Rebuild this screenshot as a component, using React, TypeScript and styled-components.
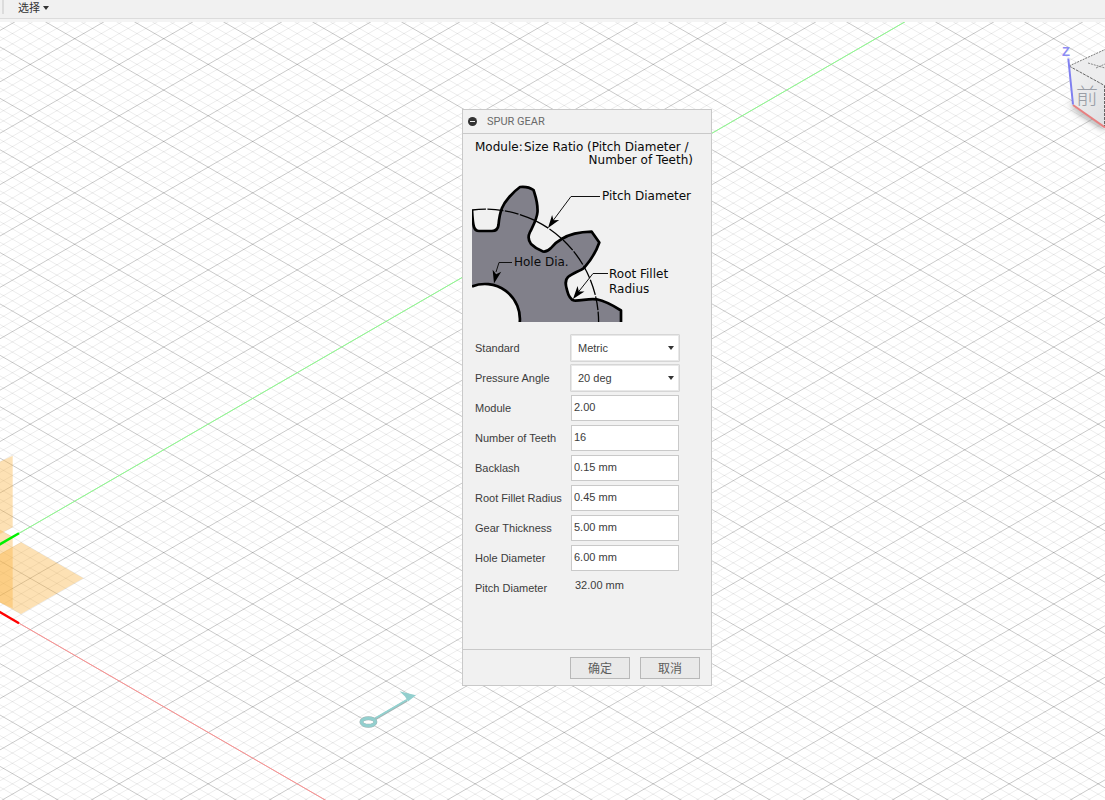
import React from 'react';
import styled, { createGlobalStyle } from 'styled-components';

const GlobalStyle = createGlobalStyle`
  * { box-sizing: border-box; }
  html, body, #root { height: 100%; }
  body {
    margin: 0;
    background: #ffffff;
    color: #3c3c3c;
    font: 11px/14px "Liberation Sans", "Noto Sans CJK SC", sans-serif;
    overflow: hidden;
  }
`;

const Page = styled.div`
  display: flex;
  flex-direction: column;
  min-height: 100%;
`;

const Toolbar = styled.header`
  display: flex;
  height: 22px;
  padding-left: 2px;
  background: linear-gradient(#f1f1f1 18px, #dcdcdc 18px, #dcdcdc 19px, #f4f4f4 19px);
`;

const ToolbarGrip = styled.span`
  width: 2px;
  height: 14px;
  background: #dcdcdc;
`;

const SelectTool = styled.button`
  display: flex;
  align-items: center;
  gap: 3px;
  height: 16px;
  margin-left: 14px;
  padding: 0;
  border: 0;
  background: none;
  color: #333333;
  font: 11px/16px "Liberation Sans", "Noto Sans CJK SC", sans-serif;
`;

const Canvas = styled.main`
  position: relative;
  flex: 1;
  overflow: hidden;
`;

const Scene = styled.svg`
  position: absolute;
  top: 0;
  left: 0;
  width: 100%;
  height: 100%;
`;

const ViewCube = styled.svg`
  position: absolute;
  top: 0;
  right: 0;
`;

const AxisLabel = styled.text`
  font: bold 13px "Liberation Sans", sans-serif;
  fill: #8c8cf4;
`;

const FaceLabel = styled.text`
  font: 300 22px "Noto Sans CJK SC", sans-serif;
  fill: #9a9ea6;
`;

const Dialog = styled.form`
  position: absolute;
  top: 87px;
  left: 462px;
  display: flex;
  flex-direction: column;
  width: 250px;
  border: 1px solid #c9c9c9;
  background: #f1f1f1;
`;

const TitleBar = styled.div`
  display: flex;
  align-items: center;
  gap: 10px;
  height: 24px;
  padding-left: 5px;
  border-bottom: 1px solid #c9c9c9;
`;

const Title = styled.h1`
  margin: 0;
  color: #6a6a6a;
  font: 400 11px/16px Roboto, sans-serif;
`;

const Collapse = styled.button`
  display: flex;
  padding: 0;
  border: 0;
  background: none;
`;

const Diagram = styled.svg`
  display: block;
  margin-left: 9px;
`;

const DiagramText = styled.text`
  font: 12px "DejaVu Sans", sans-serif;
  fill: #0a0a0a;
`;

const Fields = styled.div`
  display: flex;
  flex-direction: column;
  padding: 11px 32px 46px 12px;
`;

const Row = styled.div`
  display: grid;
  grid-template-columns: 95px 110px;
  align-items: center;
  height: 30px;
`;

const SelectBox = styled.div`
  position: relative;
  display: flex;
`;

const Select = styled.select`
  appearance: none;
  width: 100%;
  height: 28px;
  padding: 0 20px 0 7px;
  border: 1px solid #d6d6d6;
  outline: 1px solid #e8e8e8;
  outline-offset: -2px;
  border-radius: 1px;
  background: #ffffff;
  color: inherit;
  font: inherit;
`;

const SelectArrow = styled.svg`
  position: absolute;
  top: 12px;
  right: 6px;
  pointer-events: none;
`;

const Input = styled.input`
  height: 26px;
  margin: 0 1px;
  padding: 0 2px 2px;
  border: 1px solid #c9c9c9;
  background: #ffffff;
  color: inherit;
  font: inherit;
`;

const Value = styled.output`
  padding: 0 0 6px 5px;
`;

const Footer = styled.footer`
  display: flex;
  justify-content: flex-end;
  gap: 10px;
  padding: 7px 11px 6px;
  border-top: 1px solid #c9c9c9;
`;

const Button = styled.button`
  width: 60px;
  height: 22px;
  padding: 0;
  border: 1px solid #b8b8b8;
  background: #e9e9e9;
  color: #5c5c5c;
  font: 12px/18px "Noto Sans CJK SC", sans-serif;
`;

const CELL_W = 89;
const CELL_H = 51.39;
const SLOPE = CELL_H / CELL_W;
const SPAN = 2670;

/* Two families of parallel lines, mirrored about the vertical; every fifth line is a major one. */
const gridPath = (major: boolean) => {
  const parts: string[] = [];
  const rise = SLOPE * SPAN;
  for (let k = -160; k < 460; k++) {
    if ((k % 5 === 0) !== major) continue;
    const down = 16.7 - SLOPE * 74.7 + (k * CELL_H) / 5;
    const up = 16.7 + SLOPE * 74.7 + (k * CELL_H) / 5;
    parts.push(`M0 ${down.toFixed(2)}L${SPAN} ${(down + rise).toFixed(2)}`);
    parts.push(`M0 ${up.toFixed(2)}L${SPAN} ${(up - rise).toFixed(2)}`);
  }
  return parts.join('');
};

const MINOR_GRID = gridPath(false);
const MAJOR_GRID = gridPath(true);

const Workspace = () => (
  <Scene aria-hidden="true">
    <path d={MINOR_GRID} stroke="#000" strokeOpacity="0.075" fill="none" />
    <path d={MAJOR_GRID} stroke="#000" strokeOpacity="0.21" fill="none" />
    <g fill="#fbb03b" fillOpacity="0.38">
      <path d="M0 439.7L12.7 433.7V505.3L0 511.5Z" />
      <path d="M0 508L12.7 514.7V586.3L0 580.5Z" />
      <path d="M0 532L21 520.3L83.3 556.3L21 592L0 580.5Z" />
    </g>
    <path d="M18 511.9L1105 -115.7" stroke="#8cff8c" />
    <path d="M18 600.6L1105 1228.2" stroke="#ff8f8f" />
    <path d="M-2 523.4L19 511.3" stroke="#00f000" strokeWidth="2.4" />
    <path d="M-2 589L19 601.2" stroke="#ff0000" strokeWidth="2.4" />
    <g>
      <path d="M374.5 697.5L407 678.5" stroke="#a4b4b4" strokeWidth="2.6" />
      <path d="M374 697L407 677.8" stroke="#92d2d0" strokeWidth="1.8" />
      <ellipse cx="368.4" cy="700" rx="7" ry="3.8" fill="#fff" stroke="#a4b4b4" strokeWidth="4" />
      <ellipse cx="368.4" cy="700" rx="7" ry="3.8" fill="none" stroke="#92cfce" strokeWidth="3" />
      <path d="M399.5 669.3L416 673.3L408 679.5L405 674.5Z" fill="#92cfce" />
    </g>
  </Scene>
);

const Cube = () => (
  <ViewCube width="50" height="118" viewBox="1055 22 50 118" role="img" aria-label="View cube">
    <defs>
      <filter id="soft" x="-50%" y="-50%" width="200%" height="200%">
        <feGaussianBlur stdDeviation="3" />
      </filter>
      <linearGradient id="front" x1="0" y1="0" x2="1" y2="1">
        <stop offset="0" stopColor="#f3f3f3" />
        <stop offset="1" stopColor="#dedfe2" />
      </linearGradient>
    </defs>
    <path d="M1068 101L1076 112L1105 131V120Z" fill="#777" fillOpacity="0.6" filter="url(#soft)" />
    <path d="M1069 66L1105 49.5V85.5Z" fill="#ededee" />
    <path d="M1069 66L1104.5 85.5V127L1073 105Z" fill="url(#front)" />
    <path d="M1069 66L1105 49.5" stroke="#777" strokeDasharray="2 1" fill="none" />
    <path d="M1069 66L1104.5 85.5V127" stroke="#666" strokeDasharray="3 1" fill="none" />
    <path d="M1088 63L1105 68M1096 68L1105 64" stroke="#888" strokeDasharray="2 1" fill="none" />
    <FaceLabel x="1076" y="104">前</FaceLabel>
    <path d="M1073 105L1105 127.5" stroke="#e88080" strokeWidth="2" />
    <path d="M1068.3 58.5L1073 104.5" stroke="#8080f0" strokeWidth="2" />
    <AxisLabel x="1062" y="56">Z</AxisLabel>
  </ViewCube>
);

const GEAR =
  'M0 76C0.5 85 1 90 2 93C3 96 4 97 7 97H20C24 97 26 95 26.5 91C27 85 28 79 30 74C33 67 41 58 48 53C53 52.5 58 53.5 61.5 56C63 61 66 68 65.5 78C65 85 62 90 58 98C56 102 56 106 59 110C62 113 67 116 71 117.5C74 118 77 116 79 114C82 110 86 107 89.7 105C96 101 106 98 119.7 97.7L127.3 108.5C124 118 119 126 112.3 133.7C108 137 101 139 96 143C92 147 94 152 95 156C96 160 97 165 102 166.5C109 167 117 164 124.7 165.3C133 167 142 172 149 176.5V188';

const arrowHead = 'M0 0L4.4 -13L0 -9.5L-4.4 -13Z';

const GearDiagram = () => (
  <Diagram width="230" height="188" viewBox="0 0 230 188" role="img" aria-label="Spur gear dimensions">
    <path d={`${GEAR}H0V76Z`} fill="#81808a" />
    <circle cx="13" cy="185" r="35" fill="#f1f1f1" />
    <path d={GEAR} fill="none" stroke="#000" strokeWidth="2.7" strokeLinejoin="round" />
    <path d="M0 152.5A35 35 0 0 1 47.8 188" fill="none" stroke="#000" strokeWidth="2.7" />
    <path
      d="M0 76A113 113 0 0 1 126.6 188"
      fill="none"
      stroke="#000"
      strokeWidth="1.3"
      strokeDasharray="14 1.5 16 1.5"
    />
    <g fill="none" stroke="#111">
      <path d="M128 62.5H99L80 88" />
      <path d="M40 128.5H27L24 138" />
      <path d="M136 139.5H121L104 161" />
    </g>
    <path d={arrowHead} transform="translate(76 94) rotate(36)" />
    <path d={arrowHead} transform="translate(22 149.5) rotate(13)" />
    <path d={arrowHead} transform="translate(101 165) rotate(38)" />
    <DiagramText x="3" y="17">Module:</DiagramText>
    <DiagramText x="52" y="17">Size Ratio (Pitch Diameter /</DiagramText>
    <DiagramText x="221" y="30" textAnchor="end">Number of Teeth)</DiagramText>
    <DiagramText x="130" y="66">Pitch Diameter</DiagramText>
    <DiagramText x="42" y="132">Hole Dia.</DiagramText>
    <DiagramText x="137" y="144">Root Fillet</DiagramText>
    <DiagramText x="137" y="159">Radius</DiagramText>
  </Diagram>
);

const CHOICES = [
  { id: 'standard', label: 'Standard', options: ['Metric', 'English'] },
  { id: 'pressure-angle', label: 'Pressure Angle', options: ['20 deg', '14.5 deg', '25 deg'] },
];

const INPUTS = [
  { id: 'module', label: 'Module', value: '2.00' },
  { id: 'teeth', label: 'Number of Teeth', value: '16' },
  { id: 'backlash', label: 'Backlash', value: '0.15 mm' },
  { id: 'fillet', label: 'Root Fillet Radius', value: '0.45 mm' },
  { id: 'thickness', label: 'Gear Thickness', value: '5.00 mm' },
  { id: 'hole', label: 'Hole Diameter', value: '6.00 mm' },
];

export default function App() {
  return (
    <Page>
      <GlobalStyle />
      <Toolbar>
        <ToolbarGrip />
        <SelectTool type="button">
          选择
          <svg width="6" height="4" viewBox="0 0 6 4" aria-hidden="true">
            <path d="M0 0H6L3 4Z" fill="#333" />
          </svg>
        </SelectTool>
      </Toolbar>
      <Canvas>
        <Workspace />
        <Cube />
        <Dialog onSubmit={(e: React.FormEvent) => e.preventDefault()}>
          <TitleBar>
            <Collapse type="button" aria-label="Collapse">
              <svg width="9" height="9" viewBox="0 0 9 9" aria-hidden="true">
                <circle cx="4.5" cy="4.5" r="4.5" fill="#333" />
                <path d="M2 4.5H7" stroke="#f1f1f1" />
              </svg>
            </Collapse>
            <Title>SPUR GEAR</Title>
          </TitleBar>
          <GearDiagram />
          <Fields>
            {CHOICES.map(({ id, label, options }) => (
              <Row key={id}>
                <label htmlFor={id}>{label}</label>
                <SelectBox>
                  <Select id={id} defaultValue={options[0]}>
                    {options.map((option) => (
                      <option key={option}>{option}</option>
                    ))}
                  </Select>
                  <SelectArrow width="6" height="4" viewBox="0 0 6 4" aria-hidden="true">
                    <path d="M0 0H6L3 4Z" fill="#333" />
                  </SelectArrow>
                </SelectBox>
              </Row>
            ))}
            {INPUTS.map(({ id, label, value }) => (
              <Row key={id}>
                <label htmlFor={id}>{label}</label>
                <Input id={id} defaultValue={value} />
              </Row>
            ))}
            <Row>
              <label htmlFor="pitch">Pitch Diameter</label>
              <Value id="pitch">32.00 mm</Value>
            </Row>
          </Fields>
          <Footer>
            <Button type="submit">确定</Button>
            <Button type="button">取消</Button>
          </Footer>
        </Dialog>
      </Canvas>
    </Page>
  );
}
